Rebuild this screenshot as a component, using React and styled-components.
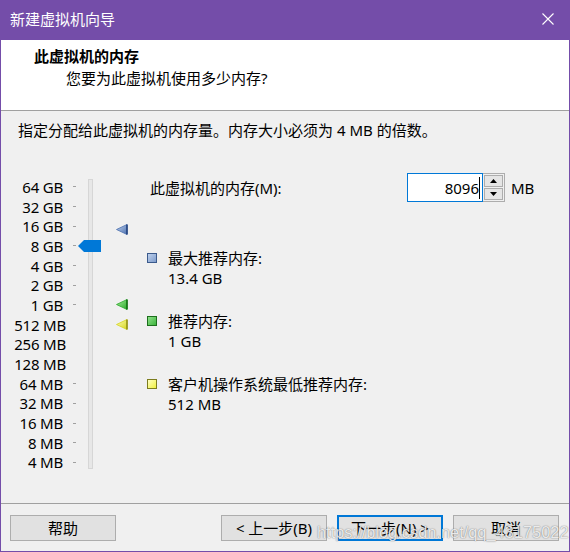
import React from "react";
import styled, { createGlobalStyle } from "styled-components";

const FONT = `"Segoe UI", "Noto Sans", "Noto Sans CJK SC", sans-serif`;

const Global = createGlobalStyle`
  html, body { margin: 0; padding: 0; background: #f0f0f0; }
  body { font-family: ${FONT}; font-size: 15px; line-height: 20px; color: #000; }
  * { box-sizing: border-box; }
`;

const Window = styled.div`
  position: relative;
  width: 570px;
  height: 552px;
  display: flex;
  flex-direction: column;
  border: 1px solid #744da9;
  border-top: none;
  background: #f0f0f0;
  overflow: hidden;
`;

const TitleBar = styled.div`
  height: 40px;
  flex: none;
  margin: 0 -1px;
  background: #744da9;
  color: #fff;
  display: flex;
  align-items: center;
  justify-content: space-between;
  padding: 0 16px 2px 10px;
  font-size: 15px;
`;

const Header = styled.div`
  flex: none;
  height: 71px;
  background: #fff;
  border-bottom: 1px solid #a0a0a0;
  padding: 6px 0 0 33px;
`;

const HeaderTitle = styled.div`
  font-weight: bold;
`;

const HeaderSub = styled.div`
  margin: 2px 0 0 32px;
`;

const Body = styled.div`
  flex: 1;
  padding: 9px 0 0 17px;
  display: flex;
  flex-direction: column;
`;

const Desc = styled.div``;

const Main = styled.div`
  display: flex;
  margin-top: 33px;
`;

const ScaleArea = styled.div`
  position: relative;
  width: 129px;
  flex: none;
  margin-top: 4px;
  display: flex;
  align-items: flex-start;
`;

const LabelCol = styled.div`
  width: 58px;
  display: flex;
  flex-direction: column;
`;

const ScaleRow = styled.div`
  height: 19.69px;
  display: flex;
  align-items: center;
  justify-content: flex-end;
  white-space: nowrap;
  letter-spacing: -0.2px;
`;

const Tick = styled.span`
  width: 3px;
  height: 1px;
  background: #a0a0a0;
  margin-left: 10px;
`;

const Track = styled.div`
  margin: 2px 0 0 12px;
  width: 5px;
  height: 290px;
  background: #e7e7e7;
  border: 1px solid #d6d6d6;
`;

const Thumb = styled.svg`
  position: absolute;
  left: 60px;
`;

const Marker = styled.svg`
  position: absolute;
  left: 98px;
`;

const RightPanel = styled.div`
  flex: 1;
  display: flex;
  flex-direction: column;
`;

const MemoryRow = styled.div`
  height: 29px;
  display: flex;
  align-items: center;
`;

const MemLabel = styled.span`
  width: 260px;
  padding-left: 3px;
`;

const InputBox = styled.div`
  width: 76px;
  height: 29px;
  border: 1px solid #0078d7;
  background: #fff;
  display: flex;
  align-items: center;
  justify-content: flex-end;
  padding-right: 2px;
`;

const Caret = styled.span`
  width: 1px;
  height: 22px;
  background: #000;
`;

const Spinner = styled.div`
  width: 22px;
  height: 29px;
  display: flex;
  flex-direction: column;
  border: 1px solid #adadad;
  border-left: none;
  background: #f0f0f0;
  padding: 1px;
  gap: 1px;
`;

const SpinBtn = styled.div`
  flex: 1;
  border: 1px solid #adadad;
  background: #e5e5e5;
  display: flex;
  align-items: center;
  justify-content: center;
`;

const Unit = styled.span`
  margin-left: 6px;
`;

const Legend = styled.div`
  margin-top: 46px;
  display: flex;
  flex-direction: column;
  gap: 23px;
`;

const LegendItem = styled.div`
  display: grid;
  grid-template-columns: 10px auto;
  column-gap: 11px;
`;

const Swatch = styled.span`
  grid-row: 1 / span 2;
  width: 10px;
  height: 10px;
  margin-top: 5px;
  border: 1px solid ${(p) => p.$edge};
  background: linear-gradient(135deg, ${(p) => p.$light}, ${(p) => p.$dark});
`;

const Footer = styled.div`
  flex: none;
  height: 48px;
  border-top: 1px solid #a0a0a0;
  display: flex;
  align-items: flex-start;
  padding: 11px 10px 0 9px;
  gap: 10px;
`;

const Button = styled.div`
  width: 106px;
  height: 26px;
  background: #e1e1e1;
  border: ${(p) => (p.$default ? "2px solid #0078d7" : "1px solid #adadad")};
  display: flex;
  align-items: center;
  justify-content: center;
  white-space: nowrap;
  margin-left: ${(p) => (p.$push ? "auto" : "0")};
`;

const Watermark = styled.div`
  position: absolute;
  left: 316px;
  top: 522px;
  font-family: "Liberation Sans", Arial, sans-serif;
  font-size: 16.4px;
  line-height: 20px;
  color: rgba(255, 255, 255, 0.85);
  text-shadow: 0 0 1px rgba(0, 0, 0, 0.45), 0 0 2px rgba(0, 0, 0, 0.2);
  pointer-events: none;
  white-space: nowrap;
`;

const ROW = 19.69;
const labels = [
  "64 GB", "32 GB", "16 GB", "8 GB", "4 GB", "2 GB", "1 GB",
  "512 MB", "256 MB", "128 MB", "64 MB", "32 MB", "16 MB", "8 MB", "4 MB",
];

const markers = [
  { idx: 2.16, light: "#c3d4ef", dark: "#4a6fae", edge: "#1d3d78" },
  { idx: 6, light: "#a6ee9a", dark: "#2aa82a", edge: "#0d6a0d" },
  { idx: 7, light: "#ffffb8", dark: "#d4d41c", edge: "#8a8a12" },
];

const legend = [
  { title: "最大推荐内存:", value: "13.4 GB", light: "#bdd0ec", dark: "#7f9ccb", edge: "#3b5a8c" },
  { title: "推荐内存:", value: "1 GB", light: "#8fe08a", dark: "#3cb43c", edge: "#1d6e1d" },
  { title: "客户机操作系统最低推荐内存:", value: "512 MB", light: "#ffffc0", dark: "#f0f040", edge: "#7c7c1e" },
];

function Tri({ m }) {
  const id = `g${String(m.idx).replace(".", "_")}`;
  return (
    <Marker
      width="12"
      height="11"
      viewBox="0 0 12 11"
      style={{ top: m.idx * ROW + ROW / 2 - 5.5 }}
    >
      <defs>
        <linearGradient id={id} x1="0" y1="0" x2="1" y2="1">
          <stop offset="0" stopColor={m.light} />
          <stop offset="1" stopColor={m.dark} />
        </linearGradient>
      </defs>
      <polygon points="0.5,5.5 11,0.5 11,10.5" fill={`url(#${id})`} stroke={m.dark} strokeWidth="0.8" />
      <line x1="11" y1="0.5" x2="11" y2="10.5" stroke={m.edge} strokeWidth="1.5" />
    </Marker>
  );
}

export default function App() {
  return (
    <>
      <Global />
      <Window>
        <TitleBar>
          <span>新建虚拟机向导</span>
          <svg width="12" height="12" viewBox="0 0 12 12">
            <path d="M0.5 0.5 L11.5 11.5 M11.5 0.5 L0.5 11.5" stroke="#fff" strokeWidth="1.1" />
          </svg>
        </TitleBar>
        <Header>
          <HeaderTitle>此虚拟机的内存</HeaderTitle>
          <HeaderSub>您要为此虚拟机使用多少内存?</HeaderSub>
        </Header>
        <Body>
          <Desc>指定分配给此虚拟机的内存量。内存大小必须为 4 MB 的倍数。</Desc>
          <Main>
            <ScaleArea>
              <LabelCol>
                {labels.map((l) => (
                  <ScaleRow key={l}>
                    <span>{l}</span>
                    <Tick />
                  </ScaleRow>
                ))}
              </LabelCol>
              <Track />
              <Thumb
                width="23"
                height="12"
                viewBox="0 0 23 12"
                style={{ top: 3 * ROW + ROW / 2 - 6 }}
              >
                <polygon points="0,6 6,0 23,0 23,12 6,12" fill="#0078d7" />
              </Thumb>
              {markers.map((m) => (
                <Tri key={m.idx} m={m} />
              ))}
            </ScaleArea>
            <RightPanel>
              <MemoryRow>
                <MemLabel>此虚拟机的内存(M):</MemLabel>
                <InputBox>
                  <span>8096</span>
                  <Caret />
                </InputBox>
                <Spinner>
                  <SpinBtn>
                    <svg width="7" height="4" viewBox="0 0 7 4">
                      <polygon points="0,4 3.5,0 7,4" fill="#000" />
                    </svg>
                  </SpinBtn>
                  <SpinBtn>
                    <svg width="7" height="4" viewBox="0 0 7 4">
                      <polygon points="0,0 7,0 3.5,4" fill="#000" />
                    </svg>
                  </SpinBtn>
                </Spinner>
                <Unit>MB</Unit>
              </MemoryRow>
              <Legend>
                {legend.map((it) => (
                  <LegendItem key={it.title}>
                    <Swatch $light={it.light} $dark={it.dark} $edge={it.edge} />
                    <span>{it.title}</span>
                    <span>{it.value}</span>
                  </LegendItem>
                ))}
              </Legend>
            </RightPanel>
          </Main>
        </Body>
        <Footer>
          <Button>帮助</Button>
          <Button $push>&lt; 上一步(B)</Button>
          <Button $default>下一步(N) &gt;</Button>
          <Button>取消</Button>
        </Footer>
        <Watermark>https://blog.csdn.net/qq_43175022</Watermark>
      </Window>
    </>
  );
}
